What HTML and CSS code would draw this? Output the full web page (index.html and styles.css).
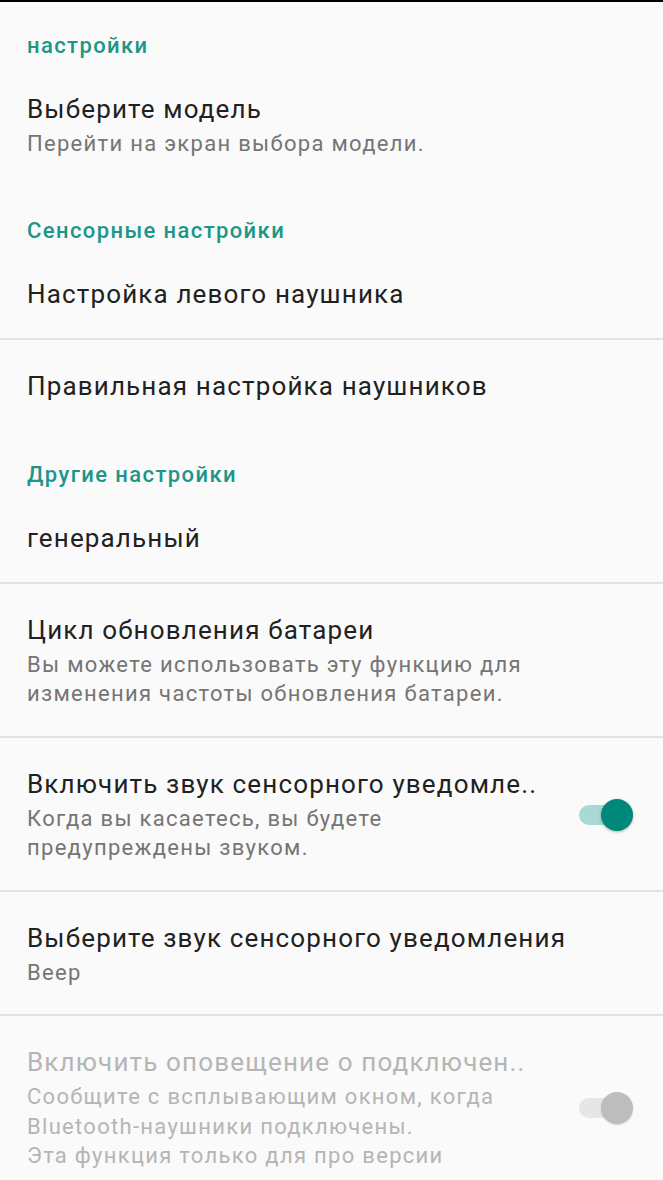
FILE: index.html
```html
<!DOCTYPE html>
<html lang="ru">
<head>
    <meta charset="UTF-8">
    <meta name="viewport" content="width=device-width, initial-scale=1.0">
    <title>Настройки</title>
    <link rel="stylesheet" href="styles.css">
</head>
<body>
    <div class="topbar"></div>

    <section class="group">
        <div class="category">настройки</div>
        <div class="pref">
            <div class="pref-text">
                <div class="title">Выберите модель</div>
                <div class="summary">Перейти на экран выбора модели.</div>
            </div>
        </div>
    </section>

    <section class="group">
        <div class="category">Сенсорные настройки</div>
        <div class="pref">
            <div class="pref-text">
                <div class="title">Настройка левого наушника</div>
            </div>
        </div>
        <div class="pref">
            <div class="pref-text">
                <div class="title">Правильная настройка наушников</div>
            </div>
        </div>
    </section>

    <section class="group">
        <div class="category">Другие настройки</div>
        <div class="pref">
            <div class="pref-text">
                <div class="title">генеральный</div>
            </div>
        </div>
        <div class="pref">
            <div class="pref-text">
                <div class="title">Цикл обновления батареи</div>
                <div class="summary">Вы можете использовать эту функцию для<br>изменения частоты обновления батареи.</div>
            </div>
        </div>
        <div class="pref">
            <div class="pref-text">
                <div class="title">Включить звук сенсорного уведомле..</div>
                <div class="summary">Когда вы касаетесь, вы будете<br>предупреждены звуком.</div>
            </div>
            <span class="switch on"><span class="track"></span><span class="thumb"></span></span>
        </div>
        <div class="pref">
            <div class="pref-text">
                <div class="title">Выберите звук сенсорного уведомления</div>
                <div class="summary">Beep</div>
            </div>
        </div>
        <div class="pref disabled">
            <div class="pref-text">
                <div class="title">Включить оповещение о подключен..</div>
                <div class="summary">Сообщите с всплывающим окном, когда<br>Bluetooth-наушники подключены.<br>Эта функция только для про версии</div>
            </div>
            <span class="switch"><span class="track"></span><span class="thumb"></span></span>
        </div>
    </section>
</body>
</html>
```

FILE: styles.css
```css
body { margin: 0; background: #fafafa; font-family: Roboto, "Noto Sans", sans-serif; color: #212121; overflow: hidden; }
.topbar { height: 2px; background: #000; }
.category { padding: 30px 27px 2px; font-size: 22px; line-height: 30px; font-weight: 500; letter-spacing: 1.4px; color: #1b9688; }
.group:first-child .category, .topbar + .group .category { padding-top: 29px; }
.pref { display: flex; align-items: center; min-height: 33px; padding: 30px 30px 27px 27px; }
.pref + .pref { border-top: 2px solid #e2e2e2; }
.pref-text { flex: 1; min-width: 0; }
.title { font-size: 26px; line-height: 32px; letter-spacing: 1.15px; white-space: nowrap; }
.summary { margin-top: 4px; font-size: 22px; line-height: 29.5px; letter-spacing: 1.3px; color: #757575; }
.disabled .title, .disabled .summary { color: #b5b5b5; }
.switch { position: relative; width: 54px; height: 32px; flex: none; }
.track { position: absolute; left: 0; top: 6px; width: 46px; height: 20px; border-radius: 10px; background: #a9d9d4; }
.thumb { position: absolute; right: 0; top: 0; width: 32px; height: 32px; border-radius: 50%; background: #00897b; box-shadow: 0 1px 3px rgba(0,0,0,.3); }
.disabled .track { background: #e6e6e6; }
.disabled .thumb { background: #bdbdbd; box-shadow: 0 1px 2px rgba(0,0,0,.15); }
```
